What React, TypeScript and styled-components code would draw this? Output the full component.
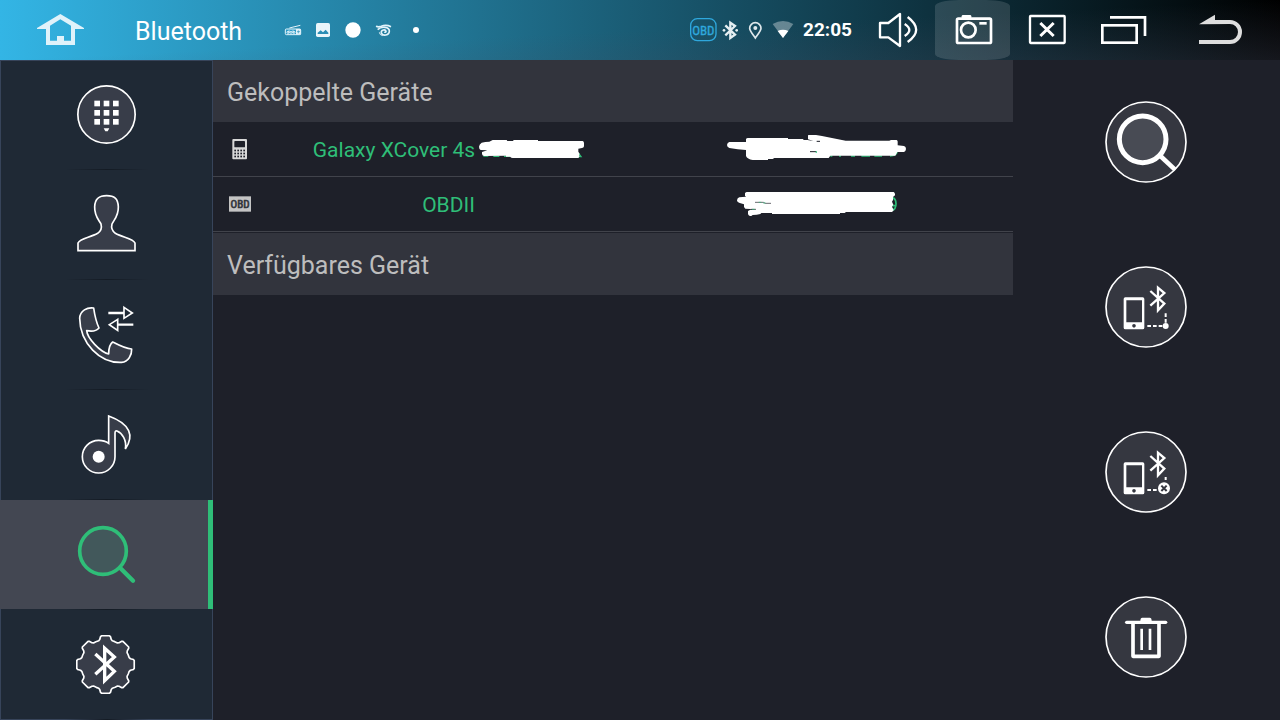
import React from "react";
import styled, { createGlobalStyle } from "styled-components";

const GlobalStyle = createGlobalStyle`
  * { box-sizing: border-box; }
  body { margin: 0; background: #1e2029; font-family: Roboto, "Liberation Sans", sans-serif; }
  button { font: inherit; color: inherit; border: 0; padding: 0; background: none; cursor: pointer; }
  svg { display: block; }
`;

const Screen = styled.div`
  min-height: 100vh;
  display: flex;
  flex-direction: column;
`;

const TopBar = styled.header`
  display: flex;
  align-items: center;
  height: 60px;
  color: #fff;
  background:
    linear-gradient(to bottom right, transparent 50%, rgba(70, 75, 95, 0.3)),
    linear-gradient(to right, #33b5e5, #000);
`;

const BarButton = styled.button<{ $wide?: boolean; $lit?: boolean }>`
  flex: none;
  width: ${(p) => (p.$wide ? 120 : 75)}px;
  height: 60px;
  border-radius: ${(p) => (p.$lit ? "24px / 6px" : "0")};
  background: ${(p) => (p.$lit ? "rgba(255, 255, 255, 0.13)" : "none")};
`;

const Title = styled.h1`
  margin: 0 38px 0 15px;
  padding-top: 4px;
  font-size: 25px;
  line-height: 32px;
  font-weight: 400;
`;

const Notifications = styled.div`
  flex: 1;
  display: flex;
  align-items: center;
  gap: 7px;
`;

const Status = styled.div`
  display: flex;
  align-items: center;
  padding-right: 8px;
`;

const Clock = styled.time`
  margin-left: 7px;
  font-size: 19px;
  line-height: 24px;
  font-weight: 700;
`;

const Body = styled.div`
  flex: 1;
  display: grid;
  grid-template-columns: 213px minmax(0, 1fr) 267px;
`;

const Nav = styled.nav`
  display: grid;
`;

const SideNav = styled.ul`
  margin: 0;
  padding: 0;
  list-style: none;
  display: flex;
  flex-direction: column;
  background: #1f2935;
  box-shadow: inset 0 0 0 1px #37445a;
`;

const NavItem = styled.li`
  flex: 1;
  display: flex;
  padding-bottom: 1px;
  background: linear-gradient(to right, transparent, #141b24, transparent) center bottom / 84px 1px no-repeat;
`;

const NavButton = styled.button<{ $active?: boolean }>`
  flex: 1;
  display: flex;
  align-items: center;
  justify-content: center;
  background: ${(p) => (p.$active ? "#434752" : "none")};
  box-shadow: ${(p) => (p.$active ? "inset -5px 0 #2fbe78" : "none")};
`;

const Section = styled.section`
  margin-bottom: 1px;
`;

const SectionTitle = styled.h2`
  margin: 0;
  padding: 17px 14px 13px;
  font-size: 25px;
  line-height: 32px;
  font-weight: 400;
  color: #bdbdbd;
  background: #32343d;
`;

const DeviceTable = styled.table`
  width: 100%;
  table-layout: fixed;
  border-collapse: separate;
  border-spacing: 0;
`;

const DeviceRow = styled.tr`
  height: 55px;
  color: #2fbe78;
  font-size: 21px;
  line-height: 28px;
`;

const Cell = styled.td`
  padding: 0 7px 0 0;
  border-bottom: 1px solid #41434b;
`;

const IconCell = styled(Cell)`
  width: 52px;
  padding: 0 0 0 14px;
`;

const AddressCell = styled(Cell)`
  padding: 0 21px 0 0;
`;

const Centered = styled.div`
  display: flex;
  align-items: center;
  justify-content: center;
  gap: 4px;
`;

const DeviceName = styled.span`
  padding-top: 2px;
`;

const Actions = styled.div`
  display: flex;
  flex-direction: column;
`;

const ActionButton = styled.button`
  flex: 1;
  display: flex;
  align-items: center;
  justify-content: center;
`;

type IconProps = { box: string; w: number; h: number; children: React.ReactNode };

function Icon({ box, w, h, children }: IconProps) {
  return (
    <svg viewBox={box} width={w} height={h} fill="none" stroke="none" aria-hidden="true">
      {children}
    </svg>
  );
}

const glassFill = "#383d49";

function gearPath(cx: number, cy: number) {
  const pts: string[] = [];
  for (let k = 0; k < 8; k++) {
    const steps: [number, number][] = [[-16, 74], [-13, 77], [-10, 85], [-8, 87], [8, 87], [10, 85], [13, 77], [16, 74], [22, 74]];
    steps.forEach(([a, r]) => {
      const t = ((k * 45 + a) * Math.PI) / 180;
      pts.push(`${(cx + r * Math.cos(t)).toFixed(1)} ${(cy + r * Math.sin(t)).toFixed(1)}`);
    });
  }
  return `M${pts.join("L")}Z`;
}

const navItems = [
  {
    label: "Wähltastatur",
    box: "228 72 183 183",
    art: (
      <>
        <circle cx="319.5" cy="163.5" r="86" fill={glassFill} stroke="#fff" strokeWidth="5" />
        {[122, 150, 177].map((y) =>
          [283, 311, 339].map((x) => <rect key={`${x}-${y}`} x={x} y={y} width="17" height="17" fill="#fff" />)
        )}
        <path d="M311 205H328L323 214H316Z" fill="#fff" />
      </>
    ),
  },
  {
    label: "Kontakte",
    box: "228 402 183 183",
    art: (
      <path
        d="M234 572V549C240 535 270 533 293 520C303 513 306 503 303 492C295 478 283 467 284 440C285 415 297 407 320 407C343 407 354 415 355 440C356 467 343 478 336 492C333 503 337 513 346 520C369 533 399 535 405 549V572Z"
        fill={glassFill} stroke="#fff" strokeWidth="5"
      />
    ),
  },
  {
    label: "Anrufliste",
    box: "228 72 183 183",
    art: (
      <>
        <path
          d="M281 84C262 81 240 92 239 115C240 190 300 250 365 247C385 245 396 225 395 207C375 206 355 195 338 186C330 192 326 205 326 222C300 215 262 175 260 152C275 155 290 152 297 144C288 125 284 105 281 84Z"
          fill={glassFill} stroke="#fff" strokeWidth="5" strokeLinejoin="round"
        />
        <path d="M325 99H372M400 134H354" stroke="#fff" strokeWidth="7" />
        <path d="M372 82L397 99L372 115ZM353 118L328 134L353 151Z" stroke="#fff" strokeWidth="5" />
      </>
    ),
  },
  {
    label: "Musik",
    box: "228 402 183 183",
    art: (
      <>
        <path
          d="M326 408V490C318 484 306 481 296 481A49 49 0 1 0 345 530V460Q345 451 351 453C366 459 381 480 376 507C403 468 392 432 326 408Z"
          fill={glassFill} stroke="#fff" strokeWidth="5"
        />
        <circle cx="296" cy="530" r="18" fill="#fff" />
      </>
    ),
  },
  {
    label: "Suche",
    active: true,
    box: "228 102 183 183",
    art: (
      <>
        <circle cx="309" cy="183" r="70" fill="#42585b" stroke="#2fbe78" strokeWidth="11" />
        <path d="M360 233L399 272" stroke="#2fbe78" strokeWidth="13" strokeLinecap="round" />
      </>
    ),
  },
  {
    label: "Bluetooth-Einstellungen",
    box: "228 432 183 183",
    art: (
      <>
        <path d={gearPath(316.5, 523.5)} fill={glassFill} stroke="#fff" strokeWidth="5" strokeLinejoin="round" />
        <path d="M286 492L343 544L314 572V475L343 501L286 553" stroke="#fff" strokeWidth="10" />
      </>
    ),
  },
];

const PhoneLink = () => (
  <>
    <path
      d="M106 142H158Q163 142 163 147V233Q163 238 158 238H106Q101 238 101 233V147Q101 142 106 142ZM109 151V217H156V151ZM132 222A5 5 0 1 0 132 233A5 5 0 1 0 132 222Z"
      fill="#fff" fillRule="evenodd"
    />
    <path d="M181 123L223 161L204 181V113L223 129L181 167" stroke="#fff" strokeWidth="7" />
  </>
);

const actions = [
  {
    label: "Geräte suchen",
    cy: 156,
    art: (
      <>
        <circle cx="158" cy="148" r="70" fill="#484b54" stroke="#fff" strokeWidth="15" />
        <path d="M208 195L255 239" stroke="#fff" strokeWidth="14" />
      </>
    ),
  },
  {
    label: "Verbinden",
    cy: 171,
    art: (
      <>
        <PhoneLink />
        <path d="M172 228H218M227 218V186" stroke="#fff" strokeWidth="6" strokeDasharray="11 6" />
        <circle cx="227" cy="228" r="9" fill="#fff" />
      </>
    ),
  },
  {
    label: "Trennen",
    cy: 171,
    art: (
      <>
        <PhoneLink />
        <path d="M172 225H200M227 195V186" stroke="#fff" strokeWidth="6" strokeDasharray="11 6" />
        <circle cx="222" cy="220" r="18" fill="#fff" />
        <path d="M214 212L230 228M230 212L214 228" stroke="#353740" strokeWidth="6" />
      </>
    ),
  },
  {
    label: "Löschen",
    cy: 156,
    art: (
      <>
        <path d="M110 112H227" stroke="#fff" strokeWidth="10" strokeLinecap="round" />
        <path d="M151 108Q151 98 157 98H179Q185 98 185 108Z" fill="#fff" />
        <path d="M129 113V214H207V113" stroke="#fff" strokeWidth="11" strokeLinejoin="round" />
        <path d="M155 131V195M180 131V195" stroke="#fff" strokeWidth="8" />
      </>
    ),
  },
];

const narrow = '"Liberation Sans Narrow", "Roboto Condensed", "DejaVu Sans Condensed", sans-serif';

export default function App() {
  return (
    <>
      <GlobalStyle />
      <Screen>
        <TopBar>
          <BarButton $wide aria-label="Startseite">
            <Icon box="0 0 360 180" w={120} h={60}>
              <path
                d="M181 42L252 84V87H225V135H138V87H111V84ZM181 58L150 77V122H171V108H192V122H213V77Z"
                fill="#e0f2fa" fillRule="evenodd"
              />
            </Icon>
          </BarButton>
          <Title>Bluetooth</Title>
          <Notifications>
            <Icon box="840 54 72 72" w={24} h={24}>
              <rect x="856" y="87" width="46" height="17" rx="3" fill="#2b9ac6" stroke="#e4f4fb" strokeWidth="3" />
              <path d="M868 84L901 76" stroke="#e4f4fb" strokeWidth="3" />
              <path d="M888 87H902V104H888Z" fill="#e4f4fb" />
              <g stroke="#e4f4fb" strokeWidth="3">
                <circle cx="864" cy="97" r="3" />
                <circle cx="873" cy="97" r="3" />
                <circle cx="882" cy="97" r="3" />
                <path d="M867 91V100M879 91V100" />
              </g>
              <path d="M891 95H900M895 91V100" stroke="#2b8fb8" strokeWidth="2" />
            </Icon>
            <Icon box="933 54 72 72" w={24} h={24}>
              <rect x="948" y="69" width="42" height="42" rx="5" fill="#e9f5fa" />
              <path d="M953 102V98L962 91L969 97L977 89L985 98V102Z" fill="#2a8db5" />
            </Icon>
            <Icon box="1026 54 72 72" w={24} h={24}>
              <circle cx="1059" cy="90" r="23" fill="#fff" />
            </Icon>
            <Icon box="1119 54 72 72" w={24} h={24}>
              <path d="M1128 79Q1136 82 1144 79Q1158 73 1173 80" stroke="#e4f4fb" strokeWidth="5" />
              <path d="M1133 89C1144 78 1168 80 1168 93C1168 106 1148 110 1144 98C1143 89 1156 87 1158 94Q1157 98 1153 96" stroke="#e4f4fb" strokeWidth="5" />
              <path d="M1138 97Q1139 105 1148 107" stroke="#e4f4fb" strokeWidth="3" />
            </Icon>
            <Icon box="1212 54 72 72" w={24} h={24}>
              <circle cx="1248" cy="90" r="9" fill="#fff" />
            </Icon>
          </Notifications>
          <Status>
            <Icon box="30 54 84 72" w={28} h={24}>
              <rect x="32" y="56" width="76" height="66" rx="20" stroke="#2fa8dd" strokeWidth="4" />
              <text x="70" y="104" fontSize="39" textAnchor="middle" fontFamily={narrow} fill="#2fa8dd" stroke="#2fa8dd" strokeWidth="1">OBD</text>
            </Icon>
            <Icon box="114 54 78 72" w={26} h={24}>
              <path d="M136 76L165 104L151 114V68L165 78L136 106" stroke="#e6eff2" strokeWidth="7" />
              <circle cx="132" cy="91" r="4" fill="#e6eff2" />
              <circle cx="170" cy="91" r="4" fill="#e6eff2" />
            </Icon>
            <Icon box="192 54 78 72" w={26} h={24}>
              <path d="M226 114C215 99 209 92 209 85A17 17 0 0 1 243 85C243 92 237 99 226 114Z" stroke="#dfe8ec" strokeWidth="5" />
              <circle cx="226" cy="84" r="6" fill="#dfe8ec" />
            </Icon>
            <Icon box="270 54 78 72" w={26} h={24}>
              <path d="M278 72Q309 54 340 72L309 114Z" fill="#fff" fillOpacity="0.35" />
              <path d="M293 93Q309 86 325 93L309 114Z" fill="#fff" />
            </Icon>
            <Clock>22:05</Clock>
          </Status>
          <BarButton aria-label="Lautstärke">
            <Icon box="540 0 225 180" w={75} h={60}>
              <path d="M600 69H625L660 42V138L625 112H600Z" stroke="#fff" strokeWidth="7" strokeLinejoin="round" />
              <path d="M674 72Q702 90 674 108M683 51Q734 90 683 126" stroke="#fff" strokeWidth="7" />
            </Icon>
          </BarButton>
          <BarButton $lit aria-label="Bildschirmfoto">
            <Icon box="45 0 225 180" w={75} h={60}>
              <rect x="111" y="56" width="102" height="73" rx="4" stroke="#fff" strokeWidth="8" />
              <circle cx="145" cy="90" r="22" stroke="#fff" strokeWidth="8" />
              <path d="M125 54V49Q125 45 129 45H150Q154 45 154 49V54Z" fill="#fff" />
              <path d="M178 70H200" stroke="#fff" strokeWidth="8" />
            </Icon>
          </BarButton>
          <BarButton aria-label="Schließen">
            <Icon box="270 0 225 180" w={75} h={60}>
              <rect x="330" y="48" width="104" height="81" rx="2" stroke="#fff" strokeWidth="7" />
              <path d="M361 69L401 108M401 69L361 108" stroke="#fff" strokeWidth="9" />
            </Icon>
          </BarButton>
          <BarButton aria-label="Letzte Apps">
            <Icon box="495 0 225 180" w={75} h={60}>
              <rect x="547" y="76" width="103" height="52" stroke="#fff" strokeWidth="8" />
              <path d="M570 52H675V108" stroke="#fff" strokeWidth="8" />
            </Icon>
          </BarButton>
          <BarButton $wide aria-label="Zurück">
            <Icon box="720 0 360 180" w={120} h={60}>
              <path d="M837 73L885 44V60H930A36 36 0 0 1 930 132H837V120H930A24 24 0 0 0 930 72Z" fill="#ddd" />
            </Icon>
          </BarButton>
        </TopBar>
        <Body>
          <Nav>
            <SideNav>
              {navItems.map((item) => (
                <NavItem key={item.label}>
                  <NavButton $active={item.active} aria-label={item.label}>
                    <Icon box={item.box} w={61} h={61}>{item.art}</Icon>
                  </NavButton>
                </NavItem>
              ))}
            </SideNav>
          </Nav>
          <main>
            <Section>
              <SectionTitle>Gekoppelte Geräte</SectionTitle>
              <DeviceTable>
                <tbody>
                  <DeviceRow>
                    <IconCell>
                      <Icon box="51 225 84 84" w={28} h={28}>
                        <rect x="67" y="237" width="44" height="61" rx="3" fill="#d8d8d8" />
                        <rect x="73" y="243" width="32" height="19" rx="2" fill="#1e2029" />
                        {[269, 278, 287].map((y) =>
                          [73, 82, 91, 100].map((x) => (
                            <rect key={`${x}-${y}`} x={x} y={y} width="5" height="5" fill="#1e2029" />
                          ))
                        )}
                      </Icon>
                    </IconCell>
                    <Cell>
                      <Centered>
                        <DeviceName>Galaxy XCover 4s</DeviceName>
                        <Icon box="807 225 315 84" w={105} h={28}>
                          <path d="M820 288H835M850 289H868M882 289H900M1104 290H1113L1106 280" stroke="#2fbe78" strokeWidth="4" />
                          <path
                            d="M815 248Q825 245 838 245L848 240H890L892 243H910V240H984V243H1118Q1122 244 1122 249V259Q1121 264 1116 264L1105 266V275L1108 280V290Q1107 294 1103 294H908Q904 294 900 290H888V287L822 288Q816 287 816 281V276L832 271L812 270Q807 267 807 260Q808 252 815 248Z"
                            fill="#fff"
                          />
                        </Icon>
                      </Centered>
                    </Cell>
                    <AddressCell>
                      <Centered>
                        <Icon box="75 45 543 84" w={181} h={28}>
                          <path d="M391 108H397M417 108H423M453 108H465M484 108H510M523 108H546M570 108Q590 107 592 94" stroke="#2fbe78" strokeWidth="4" />
                          <path
                            d="M88 66H138V58Q139 54 144 54H264V57H310V60H322L340 63L324 58V47Q326 42 332 42H346L348 45L366 48L437 62H568L573 60H590Q594 62 593 68V76L612 78Q618 80 618 87Q617 95 612 96H592L586 107H391L386 114H223L218 117H204V120H158Q142 117 138 108V90L113 88L88 84Q81 81 81 75Q82 68 88 66Z"
                            fill="#fff"
                          />
                          <path d="M350 64H360M330 95H348" stroke="#1e2029" strokeWidth="3" />
                          <path d="M347 96H351" stroke="#2fbe78" strokeWidth="5" />
                        </Icon>
                      </Centered>
                    </AddressCell>
                  </DeviceRow>
                  <DeviceRow>
                    <IconCell>
                      <Icon box="51 390 84 84" w={28} h={28}>
                        <rect x="57" y="409" width="66" height="46" fill="#c4c4c4" />
                        <text x="90" y="444" fontSize="33" textAnchor="middle" fontFamily={narrow} fill="#34363c" stroke="#34363c" strokeWidth="2">OBD</text>
                      </Icon>
                    </IconCell>
                    <Cell>
                      <Centered>
                        <DeviceName>OBDII</DeviceName>
                      </Centered>
                    </Cell>
                    <AddressCell>
                      <Centered>
                        <Icon box="75 210 543 84" w={181} h={28}>
                          <path d="M577 233Q588 236 588 251Q588 267 577 271M576 257H587" stroke="#2fbe78" strokeWidth="5" />
                          <path
                            d="M140 216H581Q585 218 585 223V226L579 231V240L576 245L580 254L576 260L581 270Q580 275 575 276H438L434 279H420V282H216V279H184L181 282L170 284L158 285L154 288Q145 288 144 281V273L151 269L168 268L136 266L132 261V253L122 250Q111 247 111 241Q112 234 118 232L138 230L135 227V220Q136 217 140 216Z"
                            fill="#fff"
                          />
                          <path d="M165 247H190L196 250H213M152 268H168" stroke="#1e2029" strokeWidth="2" />
                          <path d="M176 247H184M189 249H197M156 268H164" stroke="#2fbe78" strokeWidth="2" />
                        </Icon>
                      </Centered>
                    </AddressCell>
                  </DeviceRow>
                </tbody>
              </DeviceTable>
            </Section>
            <Section>
              <SectionTitle>Verfügbares Gerät</SectionTitle>
            </Section>
          </main>
          <Actions>
            {actions.map((action) => (
              <ActionButton key={action.label} aria-label={action.label}>
                <Icon box={`45 ${action.cy - 123} 249 249`} w={83} h={83}>
                  <circle cx="168" cy={action.cy} r="120" fill="#353740" />
                  {action.art}
                  <circle cx="168" cy={action.cy} r="120" stroke="#fff" strokeWidth="5" />
                </Icon>
              </ActionButton>
            ))}
          </Actions>
        </Body>
      </Screen>
    </>
  );
}
